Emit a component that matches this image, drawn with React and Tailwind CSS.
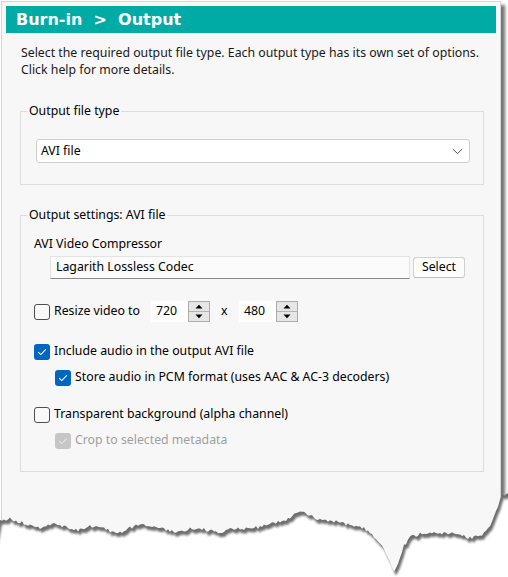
import React from "react";

const coarse = [
  [0, 521], [10, 519], [20, 522], [30, 525], [40, 528], [50, 524], [60, 525], [70, 529],
  [80, 530], [90, 526], [100, 527], [110, 531], [120, 532], [130, 528], [140, 525], [150, 527],
  [160, 528], [170, 531], [180, 532], [190, 529], [200, 528], [210, 531], [220, 532], [230, 529],
  [240, 528], [250, 529], [260, 527], [270, 524], [280, 522], [290, 518], [297, 512], [302, 511],
  [310, 515], [320, 520], [330, 521], [340, 522], [350, 525], [360, 527], [368, 530], [375, 537],
  [380, 543], [385, 550], [388, 558], [391, 565], [394, 570], [397, 566], [400, 557], [404, 546],
  [410, 537], [420, 534], [430, 532], [440, 533], [450, 533], [460, 535], [470, 538], [478, 536],
  [485, 533], [490, 527], [495, 515], [499, 503], [502, 495], [508, 493],
];

function yAt(x) {
  for (let i = 0; i < coarse.length - 1; i++) {
    const [x0, y0] = coarse[i];
    const [x1, y1] = coarse[i + 1];
    if (x >= x0 && x <= x1) return y0 + ((y1 - y0) * (x - x0)) / (x1 - x0);
  }
  return coarse[coarse.length - 1][1];
}

function jitter(x) {
  const s = Math.sin(x * 12.9898 + 78.233) * 43758.5453;
  return (s - Math.floor(s)) * 3.4 - 1.7;
}

function tornPath(dx, dy) {
  let d = "";
  for (let x = 0; x <= 508; x += 2) {
    const y = yAt(x) + jitter(x) + dy;
    d += (x === 0 ? "M" : "L") + (x + dx) + " " + y.toFixed(1) + " ";
  }
  d += "L 520 590 L -10 590 Z";
  return d;
}

function Checkbox({ checked, disabled }) {
  if (checked) {
    return (
      <span
        className={
          "flex h-[16px] w-[16px] shrink-0 items-center justify-center rounded-[3px] " +
          (disabled ? "bg-[#c6c6c6]" : "bg-[#0067c0]")
        }
      >
        <svg width="10" height="8" viewBox="0 0 10 8">
          <path
            d="M1.2 4.2 L3.8 6.6 L8.8 1.4"
            fill="none"
            stroke={disabled ? "#e6e6e6" : "#ffffff"}
            strokeWidth="1.1"
          />
        </svg>
      </span>
    );
  }
  return (
    <span className="h-[16px] w-[16px] shrink-0 rounded-[3px] border border-[#4f4f4f] bg-[#f9f9f9]" />
  );
}

function Spinner({ value }) {
  return (
    <div className="flex h-[21px]">
      <div className="flex w-[37px] items-center bg-white pl-[5px] text-black">{value}</div>
      <div className="flex w-[22px] flex-col border border-[#acacac] bg-[#e6e6e6]">
        <div className="flex flex-1 items-center justify-center border-b border-[#b4b4b4]">
          <svg width="8" height="5" viewBox="0 0 8 5">
            <path d="M0.5 4.5 L4 0.8 L7.5 4.5 Z" fill="#000" />
          </svg>
        </div>
        <div className="flex flex-1 items-center justify-center">
          <svg width="8" height="5" viewBox="0 0 8 5">
            <path d="M0.5 0.5 L4 4.2 L7.5 0.5 Z" fill="#000" />
          </svg>
        </div>
      </div>
    </div>
  );
}

export default function App() {
  return (
    <div className="relative h-[577px] w-[508px] overflow-hidden bg-white font-['Noto_Sans',sans-serif] text-[12.3px] text-black">
      <div className="ml-[1px] mt-[1px] flex h-[576px] w-[500px] flex-col border border-b-0 border-[#d6d6d6] bg-[#f7f7f7] shadow-[4px_4px_3px_rgba(0,0,0,0.55)]">
        <div className="ml-[4px] mr-[4px] mt-[4px] flex h-[27px] items-center bg-[#00aba6] pl-[10px] font-['DejaVu_Sans',sans-serif] text-[16px] font-bold whitespace-pre text-white">
          {"Burn-in  >  Output"}
        </div>

        <div className="mt-[11px] pl-[19px] leading-[17px] text-[#1a1a1a]">
          <div>Select the required output file type. Each output type has its own set of options.</div>
          <div>Click help for more details.</div>
        </div>

        <fieldset className="ml-[18px] mt-[25px] w-[464px] border border-[#dcdcdc] pb-[21px]">
          <legend className="ml-[6px] px-[2px] leading-[16px]">Output file type</legend>
          <div className="ml-[15px] mt-[20px] flex h-[24px] w-[434px] items-center justify-between rounded-[3px] border border-[#cfcfcf] bg-white pl-[4px] pr-[6px]">
            <span>AVI file</span>
            <svg width="11" height="7" viewBox="0 0 11 7">
              <path d="M0.8 1 L5.5 5.6 L10.2 1" fill="none" stroke="#555" strokeWidth="1" />
            </svg>
          </div>
        </fieldset>

        <fieldset className="ml-[18px] mt-[22px] w-[464px] border border-[#dcdcdc] pb-[22px]">
          <legend className="ml-[6px] px-[2px] leading-[16px]">Output settings: AVI file</legend>

          <div className="ml-[13px] mt-[12px] leading-[17px]">AVI Video Compressor</div>

          <div className="ml-[29px] mt-[4px] flex h-[23px] items-center gap-[3px]">
            <div className="flex h-[23px] w-[360px] items-center border border-[#e3e3e3] border-b-[#8a8a8a] bg-[#fbfbfb] pl-[5px]">
              Lagarith Lossless Codec
            </div>
            <div className="flex h-[21px] w-[52px] items-center justify-center rounded-[3px] border border-[#d0d0d0] border-b-[#bdbdbd] bg-[#fdfdfd]">
              Select
            </div>
          </div>

          <div className="ml-[13px] mt-[22px] flex h-[21px] items-center">
            <div className="flex w-[117px] items-center gap-[4px]">
              <Checkbox />
              <span>Resize video to</span>
            </div>
            <Spinner value="720" />
            <span className="ml-[11px] mr-[12px] w-[6px]">x</span>
            <Spinner value="480" />
          </div>

          <div className="ml-[13px] mt-[21px] flex h-[17px] items-center gap-[4px]">
            <Checkbox checked />
            <span>Include audio in the output AVI file</span>
          </div>

          <div className="ml-[34px] mt-[9px] flex h-[17px] items-center gap-[4px]">
            <Checkbox checked />
            <span>Store audio in PCM format (uses AAC &amp; AC-3 decoders)</span>
          </div>

          <div className="ml-[13px] mt-[20px] flex h-[17px] items-center gap-[4px]">
            <Checkbox />
            <span>Transparent background (alpha channel)</span>
          </div>

          <div className="ml-[34px] mt-[9px] flex h-[17px] items-center gap-[4px]">
            <Checkbox checked disabled />
            <span className="text-[#a0a0a0]">Crop to selected metadata</span>
          </div>
        </fieldset>
      </div>

      <svg
        className="absolute left-0 top-[480px]"
        width="508"
        height="97"
        viewBox="0 480 508 97"
      >
        <defs>
          <filter id="soft" x="-5%" y="-20%" width="110%" height="140%">
            <feGaussianBlur stdDeviation="1.2" />
          </filter>
        </defs>
        <path d={tornPath(0, 0)} fill="#6e6e6e" />
        <path d={tornPath(2, 4)} fill="#ffffff" filter="url(#soft)" />
      </svg>
    </div>
  );
}
